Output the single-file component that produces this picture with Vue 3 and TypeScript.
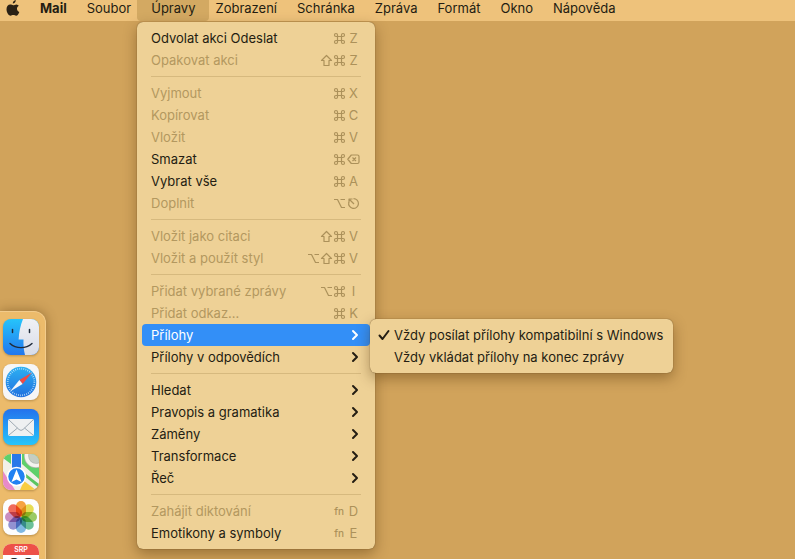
<script setup lang="ts">
interface MenuEntry {
  label: string
  keys?: string[]
  letter?: string
  disabled?: boolean
  submenu?: boolean
  active?: boolean
}

const barItems: string[] = ['Mail', 'Soubor', 'Úpravy', 'Zobrazení', 'Schránka', 'Zpráva', 'Formát', 'Okno', 'Nápověda']

const groups: MenuEntry[][] = [
  [
    { label: 'Odvolat akci Odeslat', keys: ['cmd'], letter: 'Z' },
    { label: 'Opakovat akci', keys: ['shift', 'cmd'], letter: 'Z', disabled: true },
  ],
  [
    { label: 'Vyjmout', keys: ['cmd'], letter: 'X', disabled: true },
    { label: 'Kopírovat', keys: ['cmd'], letter: 'C', disabled: true },
    { label: 'Vložit', keys: ['cmd'], letter: 'V', disabled: true },
    { label: 'Smazat', keys: ['cmd', 'delete'] },
    { label: 'Vybrat vše', keys: ['cmd'], letter: 'A' },
    { label: 'Doplnit', keys: ['option', 'escape'], disabled: true },
  ],
  [
    { label: 'Vložit jako citaci', keys: ['shift', 'cmd'], letter: 'V', disabled: true },
    { label: 'Vložit a použít styl', keys: ['option', 'shift', 'cmd'], letter: 'V', disabled: true },
  ],
  [
    { label: 'Přidat vybrané zprávy', keys: ['option', 'cmd'], letter: 'I', disabled: true },
    { label: 'Přidat odkaz…', keys: ['cmd'], letter: 'K', disabled: true },
    { label: 'Přílohy', submenu: true, active: true },
    { label: 'Přílohy v odpovědích', submenu: true },
  ],
  [
    { label: 'Hledat', submenu: true },
    { label: 'Pravopis a gramatika', submenu: true },
    { label: 'Záměny', submenu: true },
    { label: 'Transformace', submenu: true },
    { label: 'Řeč', submenu: true },
  ],
  [
    { label: 'Zahájit diktování', keys: ['fn'], letter: 'D', disabled: true },
    { label: 'Emotikony a symboly', keys: ['fn'], letter: 'E' },
  ],
]

const keyShapes: Record<string, string> = {
  cmd: 'M4.500 4.500V3A1.500 1.500 0 1 0 3 4.500H10A1.500 1.500 0 1 0 8.500 3V10A1.500 1.500 0 1 0 10 8.500H3A1.500 1.500 0 1 0 4.500 10Z',
  shift: 'M6.500 1.500L11.500 6.500H9V11.500H4V6.500H1.500Z',
  option: 'M1 2.500H4.500L8.500 10.500H12M7.500 2.500H12',
}

const petals = [
  { angle: 0, color: '#f7941e' },
  { angle: 45, color: '#e4d936' },
  { angle: 90, color: '#8bc34a' },
  { angle: 135, color: '#52b788' },
  { angle: 180, color: '#6aaee0' },
  { angle: 225, color: '#8080cc' },
  { angle: 270, color: '#c27cba' },
  { angle: 315, color: '#f0523f' },
]
</script>

<template>
  <div class="desktop">
    <nav class="menubar">
      <svg class="apple" viewBox="0 0 14 17" aria-label="Apple">
        <path d="M9.8 0C9.9 1.9 8.5 3.5 6.8 3.6C6.6 1.9 8.1.3 9.8 0ZM12.8 5.8C11.4 6.6 10.9 7.8 11 9C11.1 10.4 12 11.4 13.3 11.9C12.8 13.6 11.6 15.7 10.1 15.8C9 15.8 8.6 15.1 7.3 15.1C6 15.1 5.5 15.8 4.5 15.8C2.4 15.7.5 12.2.5 9.3C.5 6.3 2.2 4.5 4.2 4.5C5.5 4.5 6.3 5.2 7.3 5.2C8.2 5.2 9.1 4.4 10.5 4.4C11.5 4.5 12.3 5 12.8 5.8Z" />
      </svg>
      <button v-for="item in barItems" :key="item" type="button" class="bar-item" :class="{ app: item === 'Mail', open: item === 'Úpravy' }">{{ item }}</button>
    </nav>

    <aside class="dock" aria-label="Dock">
      <svg class="dock-icon" viewBox="0 0 36 36" aria-label="Finder">
        <defs>
          <clipPath id="tile"><rect width="36" height="36" rx="8" /></clipPath>
          <linearGradient id="finderBlue" x2="0" y2="1"><stop stop-color="#26c4fb" /><stop offset="1" stop-color="#2277ee" /></linearGradient>
          <linearGradient id="finderWhite" x2="0" y2="1"><stop stop-color="#f0f1f5" /><stop offset="1" stop-color="#d8dce7" /></linearGradient>
        </defs>
        <g clip-path="url(#tile)">
          <path fill="url(#finderBlue)" d="M0 0H36V36H0Z" />
          <path fill="url(#finderWhite)" d="M20 0C17.5 6 16 13 15.6 20.5H20.5C20.3 26 20.7 31 22 36H36V0Z" />
          <path fill="none" stroke="#202b3a" stroke-width="1.5" stroke-linecap="round" d="M9.5 10.5V13.5M26.500 10.500V13.500" />
          <path fill="none" stroke="#202b3a" stroke-width="1.400" stroke-linecap="round" d="M7 24.500C13 30 23 30 29 24.500" />
        </g>
      </svg>
      <svg class="dock-icon" viewBox="0 0 36 36" aria-label="Safari">
        <defs><linearGradient id="safariBlue" x2="0" y2="1"><stop stop-color="#2db1f3" /><stop offset="1" stop-color="#1f70df" /></linearGradient></defs>
        <rect width="36" height="36" rx="8" fill="#f6f6f6" />
        <circle cx="18" cy="18" r="15.300" fill="url(#safariBlue)" />
        <circle cx="18" cy="18" r="13.300" fill="none" stroke="#c6e5fa" stroke-width="1.800" stroke-dasharray=".7 1.390" />
        <path fill="#f14a43" d="M29 8.500L16.400 15.900L19.600 20.100Z" />
        <path fill="#f5f7f9" d="M7 27.500L16.400 15.900L19.600 20.100Z" />
      </svg>
      <svg class="dock-icon" viewBox="0 0 36 36" aria-label="Pošta">
        <defs><linearGradient id="mailBlue" x2="0" y2="1"><stop stop-color="#2472ed" /><stop offset="1" stop-color="#27c5fa" /></linearGradient></defs>
        <rect width="36" height="36" rx="8" fill="url(#mailBlue)" />
        <rect x="5" y="10" width="26" height="17" rx="2" fill="#eef0f1" />
        <path fill="none" stroke="#9faab3" stroke-width="1" d="M6 11L16 20.500Q18 22.300 20 20.500L30 11M6 26L14.500 19M30 26L21.500 19" />
      </svg>
      <svg class="dock-icon" viewBox="0 0 36 36" aria-label="Mapy">
        <g clip-path="url(#tile)">
          <path fill="#f2f0e9" d="M0 0H36V36H0Z" />
          <path fill="#5fd06a" d="M0 0H8V10L0 4ZM19 0H36V25L19 10Z" />
          <path fill="#e88ac8" d="M0 17L12 36H0Z" />
          <path fill="#f9cd42" d="M21 27L33 36H17Z" />
          <path fill="#5bc55f" d="M19 17L36 30V34L20 21Z" />
          <circle cx="33" cy="2" r="9.500" fill="#c5cdc2" stroke="#b4bab2" stroke-width="5" />
          <circle cx="33" cy="2" r="9.500" fill="none" stroke="#f4f3ee" stroke-width="3.500" />
          <path fill="#2878e9" d="M9 0H18V22H9Z" />
          <circle cx="13.500" cy="22.500" r="9" fill="#2181f2" stroke="#fff" stroke-width="1.500" />
          <path fill="#fff" d="M13.500 15.500L18.500 28L13.500 25.500L8.500 28Z" />
        </g>
      </svg>
      <svg class="dock-icon" viewBox="0 0 36 36" aria-label="Fotky">
        <rect width="36" height="36" rx="8" fill="#fdfdfd" />
        <rect v-for="p in petals" :key="p.angle" class="petal" x="13" y="2" width="10" height="15.500" rx="5" :fill="p.color" :transform="`rotate(${p.angle} 18 18)`" />
      </svg>
      <div class="calendar">
        <span class="month">SRP</span>
        <span class="day">23</span>
      </div>
    </aside>

    <div class="menu main-menu" role="menu">
      <div v-for="(group, g) in groups" :key="g" class="group" role="group">
        <button v-for="entry in group" :key="entry.label" type="button" role="menuitem" class="row" :class="{ active: entry.active }" :disabled="entry.disabled">
          <span class="label">{{ entry.label }}</span>
          <svg v-if="entry.submenu" class="chevron" viewBox="0 0 8 12"><path d="M2 2L6 6L2 10" /></svg>
          <span v-else class="shortcut">
            <template v-for="k in entry.keys" :key="k">
              <span v-if="k === 'fn'" class="fn">fn</span>
              <svg v-else-if="k === 'delete'" class="wide-key" viewBox="0 0 15 13"><path d="M5.300 2H11.500Q13 2 13 3.500V9Q13 10.500 11.500 10.500H5.300L1.800 6.250ZM6.500 4.500L10 8M10 4.500L6.500 8" /></svg>
              <svg v-else-if="k === 'escape'" class="wide-key" viewBox="0 0 15 13"><path d="M7.500 1.600A4.900 4.900 0 1 1 2.800 5.300M8 7L3.500 2.500M3 5.500V2H6.500" /></svg>
              <svg v-else class="key" viewBox="0 0 13 13"><path :d="keyShapes[k]" /></svg>
            </template>
            <span v-if="entry.letter" class="letter">{{ entry.letter }}</span>
          </span>
        </button>
      </div>
    </div>

    <div class="menu submenu" role="menu">
      <button type="button" class="row" role="menuitemcheckbox" aria-checked="true">
        <svg class="check" viewBox="0 0 12 12"><path d="M1.500 6.500L4.500 10L10.500 2" /></svg>
        <span class="label">Vždy posílat přílohy kompatibilní s Windows</span>
      </button>
      <button type="button" class="row" role="menuitemcheckbox" aria-checked="false">
        <span class="check"></span>
        <span class="label">Vždy vkládat přílohy na konec zprávy</span>
      </button>
    </div>
  </div>
</template>

<style>
body {
  margin: 0;
  background: #d1a35b;
}
</style>

<style scoped>
.desktop {
  position: relative;
  height: 100vh;
  overflow: hidden;
  background: #d1a35b;
  color: #241d12;
  font: 13px/22px Inter, "Liberation Sans", sans-serif;
}

button {
  margin: 0;
  padding: 0;
  border: 0;
  background: none;
  color: inherit;
  font: inherit;
  text-align: left;
  white-space: nowrap;
}

.menubar {
  display: flex;
  height: 21px;
  padding-left: 6px;
  background: #eec27b;
}

.apple {
  width: 14px;
  height: 17px;
  margin-right: 10px;
  fill: #2a2115;
}

.bar-item {
  height: 21px;
  padding: 0 10px 4px;
  line-height: 17px;
}

.app {
  font-weight: 700;
}

.open {
  margin: 0 -4px;
  padding: 0 14px 4px;
  border-radius: 0 0 4px 4px;
  background: #d3a962;
}

.dock {
  display: flex;
  flex-direction: column;
  gap: 9px;
  width: 42px;
  height: 400px;
  margin-top: 290px;
  padding: 7px 0 0 3px;
  border: 1px solid #f3cb8a;
  border-left: 0;
  border-radius: 0 12px 0 0;
  background: #ecbb6b;
  box-shadow: 0 0 12px rgba(80, 50, 10, 0.45);
}

.dock-icon {
  flex: none;
  width: 36px;
  height: 36px;
  filter: drop-shadow(0 1px 1px rgba(70, 40, 0, 0.3));
}

.petal {
  mix-blend-mode: multiply;
  opacity: 0.85;
}

.calendar {
  display: flex;
  flex-direction: column;
  flex: none;
  width: 36px;
  height: 36px;
  overflow: hidden;
  border-radius: 8px;
  background: #fff;
  text-align: center;
}

.month {
  background: #ed5148;
  color: #fff;
  font-size: 7px;
  font-weight: 600;
  line-height: 11px;
}

.day {
  color: #272727;
  font-size: 23px;
  line-height: 25px;
}

.menu {
  position: absolute;
  box-sizing: border-box;
  padding: 5px;
  border-radius: 6px;
  background: #eed196;
  box-shadow: 0 0 1px rgba(60, 35, 0, 0.8), 0 5px 14px rgba(70, 40, 0, 0.4);
}

.main-menu {
  top: 22px;
  left: 137px;
  width: 238px;
}

.submenu {
  top: 319px;
  left: 370px;
  width: 303px;
}

.group + .group::before {
  content: "";
  display: block;
  height: 1px;
  margin: 5px 9px;
  background: #d6b97e;
}

.row {
  display: flex;
  align-items: center;
  width: 100%;
  height: 22px;
  padding: 0 9px;
  border-radius: 4px;
}

.row:disabled {
  color: #b3985f;
}

.label {
  flex: 1;
}

.active {
  background: #338ff7;
  color: #fff;
}

.shortcut {
  display: flex;
  align-items: center;
  color: #ac915a;
}

.key,
.wide-key,
.chevron,
.check path {
  fill: none;
  stroke: currentColor;
  stroke-linejoin: round;
}

.key {
  width: 13px;
  height: 13px;
  stroke-width: 1.2;
}

.wide-key {
  width: 15px;
  height: 13px;
  stroke-width: 1.2;
}

.letter {
  width: 15px;
  text-align: center;
}

.fn {
  margin-right: 2px;
  font-size: 10px;
  font-weight: 500;
}

.chevron {
  width: 8px;
  height: 12px;
  margin-right: 2px;
  stroke-width: 2;
  stroke-linecap: round;
}

.submenu .row {
  padding: 0 0 0 3px;
}

.check {
  flex: none;
  width: 12px;
  height: 12px;
  margin-right: 4px;
}

.check path {
  stroke-width: 2;
  stroke-linecap: round;
}
</style>
